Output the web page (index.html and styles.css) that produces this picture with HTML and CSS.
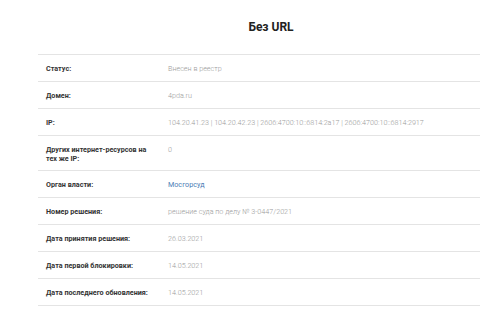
FILE: index.html
```html
<!DOCTYPE html>
<html lang="ru">
<head>
<meta charset="utf-8">
<link rel="stylesheet" href="styles.css">
</head>
<body>
<div class="page">
  <h1 class="title">Без URL</h1>
  <div class="table">
    <div class="row"><div class="label">Статус:</div><div class="value">Внесен в реестр</div></div>
    <div class="row"><div class="label">Домен:</div><div class="value">4pda.ru</div></div>
    <div class="row"><div class="label">IP:</div><div class="value">104.20.41.23 | 104.20.42.23 | 2606:4700:10::6814:2a17 | 2606:4700:10::6814:2917</div></div>
    <div class="row tall"><div class="label">Других интернет-ресурсов на тех же IP:</div><div class="value">0</div></div>
    <div class="row"><div class="label">Орган власти:</div><div class="value"><a class="link" href="#">Мосгорсуд</a></div></div>
    <div class="row"><div class="label">Номер решения:</div><div class="value">решение суда по делу № 3-0447/2021</div></div>
    <div class="row"><div class="label">Дата принятия решения:</div><div class="value">26.03.2021</div></div>
    <div class="row"><div class="label">Дата первой блокировки:</div><div class="value">14.05.2021</div></div>
    <div class="row"><div class="label">Дата последнего обновления:</div><div class="value">14.05.2021</div></div>
  </div>
</div>
</body>
</html>
```
FILE: styles.css
```css
html, body {
  margin: 0;
  padding: 0;
  background: #fff;
  overflow: hidden;
}
body {
  font-family: Roboto, "Noto Sans", sans-serif;
  color: #333;
}
.page {
  margin-left: 38px;
  width: 466px;
}
.title {
  margin: 0;
  height: 54px;
  display: flex;
  align-items: center;
  justify-content: center;
  font-size: 12px;
  font-weight: 700;
  color: #222;
}
.table {
  border-top: 1px solid #e4e4e4;
}
.row {
  display: grid;
  grid-template-columns: 130px 1fr;
  align-items: center;
  min-height: 26px;
  border-bottom: 1px solid #e4e4e4;
  font-size: 7.2px;
  line-height: 9px;
}
.row.tall {
  align-items: start;
  min-height: 35px;
  padding-top: 9px;
  box-sizing: border-box;
}
.label {
  padding-left: 8px;
  padding-right: 18px;
  font-weight: 700;
  color: #333;
}
.value {
  color: #9a9a9a;
  font-weight: 300;
}
.link {
  color: #4a7db5;
  text-decoration: none;
  font-weight: 400;
}
```
